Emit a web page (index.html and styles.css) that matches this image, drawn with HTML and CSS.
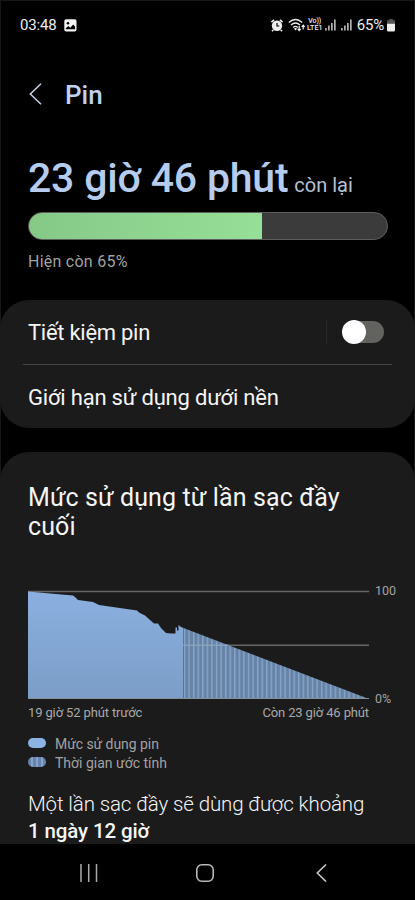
FILE: index.html
```html
<!DOCTYPE html>
<html lang="vi">
<head>
<meta charset="utf-8">
<title>Pin</title>
<link rel="stylesheet" href="styles.css">
</head>
<body>
<div class="phone">
  <header class="status">
    <span class="clock">03:48</span>
    <svg class="picture" width="13" height="13" viewBox="0 0 13 13"><rect x=".3" y=".3" width="12.2" height="12.2" rx="1.8" fill="#f4f4f4"/><circle cx="4" cy="4.2" r="1.3" fill="#000"/><path d="M1.8 10.3V9.2L4.3 7l2 1.7L9.2 5.500l1.900 2.200v2.600z" fill="#000"/></svg>
    <div class="status-right">
      <svg class="alarm" width="12" height="13" viewBox="0 0 12 13"><path d="M.4 3.200 3 .8M11.600 3.200 9 .8M2.300 11 1 12.200M9.700 11 11 12.200" stroke="#eee" stroke-width="1.700"/><circle cx="6" cy="6.700" r="5.200" fill="#eee"/><path d="M6 4v3h2.300" stroke="#000" stroke-width="1.200" fill="none"/></svg>
      <svg class="wifi" width="18" height="14" viewBox="0 0 18 14"><g fill="none" stroke="#eee" stroke-width="1.300"><path d="M.8 4.500Q7.500-1.600 14.200 4.500M3 7Q7.500 2.900 12 7M5.200 9.400Q7.500 7.400 9.800 9.400"/></g><path d="m7.500 12.600-1.700-2q1.700-1.200 3.400 0z" fill="#eee"/><path d="M11.200 8v4.300M9.700 10.900l1.500 1.600 1.500-1.600M15.200 11.500V7.300M13.700 8.800l1.500-1.600 1.500 1.600" fill="none" stroke="#eee" stroke-width="1.200"/></svg>
      <span class="volte"><span>Vo))</span><span class="lte">LTE1</span></span>
      <svg class="signal" width="11" height="12" viewBox="0 0 11 12"><path d="M.9 9v2.500M3.900 6.500v5M6.900 4v7.500M9.900.5v11" stroke="#e6e6e6" stroke-width="1.300"/></svg>
      <svg class="signal second" width="11" height="12" viewBox="0 0 11 12"><path d="M.9 9v2.500M3.900 6.500v5M6.900 4v7.500M9.900.5v11" stroke="#e6e6e6" stroke-width="1.300"/></svg>
      <span class="percent">65%</span>
      <svg class="cell" width="8" height="13" viewBox="0 0 9 13" preserveAspectRatio="none"><path d="M2.500 0h4v1.200H9V5H0V1.200h2.500z" fill="#555"/><path d="M0 4.800h9v6.200a1.500 1.500 0 0 1-1.500 1.500h-6A1.500 1.500 0 0 1 0 11z" fill="#eee"/></svg>
    </div>
  </header>

  <main class="content">
    <div class="toolbar">
      <svg class="back" width="13" height="22" viewBox="0 0 13 22"><path d="M12 .8 1.300 11 12 21.200" fill="none" stroke="#c6d3e6" stroke-width="1.500"/></svg>
      <h1>Pin</h1>
    </div>

    <section class="summary">
      <p class="remaining"><strong>23 giờ 46 phút</strong><span>còn lại</span></p>
      <div class="meter"><div class="meter-fill" style="width:65%"></div></div>
      <p class="level"><span>Hiện còn 65%</span></p>
    </section>

    <section class="card settings">
      <div class="row"><span class="saver">Tiết kiệm pin</span><div class="switch-area"><div class="switch"><div class="thumb"></div></div></div></div>
      <div class="row"><span class="limit">Giới hạn sử dụng dưới nền</span></div>
    </section>

    <section class="card usage">
      <h2>Mức sử dụng từ lần sạc đầy<br>cuối</h2>
      <div class="chart">
        <svg width="341" height="110" viewBox="0 0 341 110">
          <defs>
            <linearGradient id="used" x1="0" y1="0" x2="0" y2="1"><stop offset="0" stop-color="#8bb0e0"/><stop offset="1" stop-color="#7b9dc7"/></linearGradient>
            <pattern id="stripes" width="4.570" height="110" patternUnits="userSpaceOnUse" x="155.800"><rect width="4.570" height="110" fill="#6683a5"/><rect width="1.400" height="110" fill="#87a6cb"/></pattern>
          </defs>
          <path d="M0 1.500h341M155 55.200h186" stroke="#666" stroke-width="1.500"/>
          <path d="M0 1.500 22 3.500 45 5.500 47 7 50 10 65 12 71 15 109 20.500 111 22.500 117 25.500 122 30 126 33.500H130L133 38 138 43 143 43.500H147.500V37.500H149V40.500H150.500V35L153 37 155.500 38V109H0Z" fill="url(#used)"/>
          <path d="M155.500 38 341 109H155.500Z" fill="url(#stripes)"/>
          <path d="M155.500 55.200h45" stroke="#95aabe" stroke-width="1"/>
          <path d="M0 108.500h341" stroke="#84919b" stroke-width="1"/>
        </svg>
        <div class="scale"><span>100</span><span>0%</span></div>
      </div>
      <div class="times"><span class="past">19 giờ 52 phút trước</span><span class="future">Còn 23 giờ 46 phút</span></div>
      <ul class="legend">
        <li><i class="swatch"></i><span class="key1">Mức sử dụng pin</span></li>
        <li><i class="swatch striped"></i><span class="key2">Thời gian ước tính</span></li>
      </ul>
      <p class="estimate"><span>Một lần sạc đầy sẽ dùng được khoảng</span><br><strong>1 ngày 12 giờ</strong></p>
    </section>
  </main>

  <nav class="navbar">
    <svg width="18" height="18" viewBox="0 0 18 18"><path d="M1 0v18M8.700 0v18M16.500 0v18" stroke="#aaa" stroke-width="1.500"/></svg>
    <svg class="nav-home" width="18" height="18" viewBox="0 0 18 18"><rect x=".8" y=".8" width="16.400" height="16.400" rx="5" fill="none" stroke="#b8b8b8" stroke-width="1.600"/></svg>
    <svg class="nav-back" width="11" height="18" viewBox="0 0 11 18"><path d="M10 .5 1.300 9 10 17.500" fill="none" stroke="#c8c8c8" stroke-width="1.600"/></svg>
  </nav>
</div>
</body>
</html>
```
FILE: styles.css
```css
* { box-sizing: border-box; }
body { margin: 0; background: #000; }
h1, h2, p, ul { margin: 0; padding: 0; }
.phone {
  width: 415px; height: 900px; overflow: hidden;
  display: flex; flex-direction: column;
  background: #000; color: #f5f5f5;
  font-family: Roboto, "Noto Sans", sans-serif;
  box-shadow: inset 0 0 0 1px #171717;
}
.status { height: 50px; flex: none; display: flex; align-items: center; padding: 0 20px; font-size: 15px; color: #eee; }
.clock { letter-spacing: -.15px; }
.picture { margin-left: 7px; }
.status-right { margin-left: auto; display: flex; align-items: center; }
.wifi { margin-left: 5px; }
.volte { display: flex; flex-direction: column; align-items: center; width: 16px; margin-left: 1px; font-size: 7px; line-height: 7px; font-weight: 500; letter-spacing: -.1px; }
.lte { letter-spacing: .1px; }
.signal { margin-left: 2px; }
.signal.second { margin-left: 5px; }
.percent { margin-left: 5px; letter-spacing: -.2px; }
.cell { margin-left: 3px; }

.content { flex: 1; min-height: 0; overflow: hidden; }
.toolbar { height: 89px; display: flex; align-items: center; padding-left: 29px; }
.back { margin-top: -2px; }
h1 { margin-left: 23px; font-size: 26px; font-weight: 500; color: #bfd2ef; }
.summary { padding: 15px 28px 0; height: 160.500px; }
.remaining { display: flex; align-items: baseline; height: 48px; line-height: 48px; white-space: nowrap; }
.remaining strong { font-size: 41px; font-weight: 500; letter-spacing: -.22px; color: #b5ccee; }
.remaining span { margin-left: 6px; font-size: 20px; color: #b4c1d4; font-weight: 400; }
.meter { margin-top: 10px; width: 360px; height: 28px; border-radius: 14px; border: 1px solid #5d5d5d; overflow: hidden; background: #3b3b3b; }
.meter-fill { height: 100%; background: linear-gradient(90deg, #86c987, #96df98); }
.level { margin-top: 12px; font-size: 16px; letter-spacing: .25px; line-height: 20px; color: #a2a2a2; }

.card { background: #1b1b1b; border-radius: 29px; }
.settings { height: 128.500px; }
.row { height: 64.500px; display: flex; align-items: center; justify-content: space-between; padding: 0 31px 0 28px; font-size: 22px; }
.row span { padding-top: 2px; }
.saver { letter-spacing: -.27px; }
.limit { letter-spacing: -.2px; }
.row + .row { height: 64px; margin: 0 23px; padding: 0 5px; border-top: 1px solid #444; }
.switch-area { display: flex; align-items: center; height: 25px; padding-left: 16px; border-left: 1px solid #292929; }
.switch { width: 41px; height: 22px; border-radius: 11px; background: #62625f; display: flex; align-items: center; }
.thumb { width: 24px; height: 24px; flex: none; margin-left: -1.500px; border-radius: 50%; background: #fff; }

.usage { margin-top: 23.500px; padding: 31px 0 0 28px; height: 450px; }
h2 { font-size: 25px; letter-spacing: .12px; line-height: 29.500px; font-weight: 400; white-space: nowrap; }
.chart { display: flex; margin-top: 48px; height: 110px; }
.chart svg { flex: none; }
.scale { margin: -7px 0 -7px 6px; display: flex; flex-direction: column; justify-content: space-between; font-size: 12.500px; line-height: 16px; color: #a2a2a2; }
.times { width: 341px; display: flex; justify-content: space-between; margin-top: 5px; font-size: 13px; letter-spacing: -.13px; line-height: 16px; color: #a9a9a9; }
.legend { list-style: none; margin-top: 14px; font-size: 14px; line-height: 19px; color: #a2a2a2; }
.legend li { display: flex; align-items: center; height: 19px; }
.key1 { letter-spacing: -.06px; }
.swatch { width: 18px; height: 10px; margin: -2px 9px 0 0; border-radius: 5px; background: #8bb3e3; }
.striped { background: repeating-linear-gradient(90deg, #6684ad 0 3.500px, #86a3ca 3.500px 5px); }
.estimate { margin-top: 18px; font-size: 20.500px; letter-spacing: -.12px; line-height: 27.500px; font-weight: 300; white-space: nowrap; }
.estimate strong { font-weight: 500; }

.navbar { height: 56px; flex: none; display: flex; align-items: center; padding: 2px 88px 0 80px; justify-content: space-between; background: #000; }
.nav-home { margin-right: 4px; }
```
